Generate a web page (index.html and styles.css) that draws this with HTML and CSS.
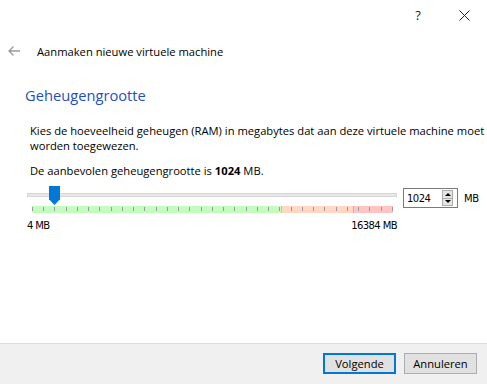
FILE: index.html
```html
<!DOCTYPE html>
<html>
<head>
	<meta charset="utf-8">
	<title>Aanmaken nieuwe virtuele machine</title>
	<link rel="stylesheet" href="styles.css">
</head>
<body>
	<div class="window">
		<div class="titlebar">
			<span class="tb-btn">?</span>
			<span class="tb-btn">
				<svg width="11" height="11" viewBox="0 0 11 11"><path d="M0.5 0.5 L10.5 10.5 M10.5 0.5 L0.5 10.5" stroke="#222" stroke-width="1" fill="none"/></svg>
			</span>
		</div>

		<div class="header">
			<svg class="back" width="12" height="10" viewBox="0 0 12 10"><path d="M5.5 0.5 L1 5 L5.5 9.5 M1 5 L12 5" stroke="#9a9a9a" stroke-width="1.3" fill="none"/></svg>
			<span class="header-title">Aanmaken nieuwe virtuele machine</span>
		</div>

		<div class="content">
			<h1 class="heading">Geheugengrootte</h1>
			<p class="desc">Kies de hoeveelheid geheugen (RAM) in megabytes dat aan deze virtuele machine moet worden toegewezen.</p>
			<p class="desc recommend">De aanbevolen geheugengrootte is <b>1024</b> MB.</p>

			<div class="slider-row">
				<div class="slider">
					<div class="track">
						<div class="thumb"></div>
					</div>
					<div class="scale">
						<div class="zone green" style="width:69.4%"></div>
						<div class="zone orange" style="width:19.8%"></div>
						<div class="zone red" style="width:10.8%"></div>
						<div class="ticks"></div>
					</div>
					<div class="scale-labels">
						<span>4 MB</span>
						<span>16384 MB</span>
					</div>
				</div>
				<div class="spin">
					<span class="spin-value">1024</span>
					<span class="spin-btns">
						<span class="spin-up"></span>
						<span class="spin-down"></span>
					</span>
				</div>
				<span class="unit">MB</span>
			</div>
		</div>

		<div class="footer">
			<button class="btn btn-default">Volgende</button>
			<button class="btn">Annuleren</button>
		</div>
	</div>
</body>
</html>
```

FILE: styles.css
```css
body
{
	margin: 0px;
	padding: 0px;
	background: white;
	font-family: "Segoe UI", "Open Sans", "Noto Sans", sans-serif;
	font-size: 11.2px;
	color: #000;
}

.window
{
	width: 487px;
	height: 384px;
	display: flex;
	flex-direction: column;
	overflow: hidden;
}

.titlebar
{
	height: 30px;
	display: flex;
	justify-content: flex-end;
}

.tb-btn
{
	width: 46px;
	height: 30px;
	display: flex;
	align-items: center;
	justify-content: center;
	font-size: 13px;
	color: #222;
}

.header
{
	height: 26px;
	margin-top: 8px;
	display: flex;
	align-items: center;
	padding-left: 8px;
}

.back { margin-right: 17px; }

.header-title
{
	font-size: 11.2px;
	color: #000;
}

.content
{
	padding: 0px 0px 0px 25px;
}

.heading
{
	margin: 20px 0px 0px 0px;
	font-size: 14.7px;
	font-weight: normal;
	color: #1f4fbf;
	line-height: 22px;
}

.desc
{
	margin: 17px 0px 0px 5px;
	line-height: 15px;
	font-size: 11.2px;
}

.recommend { margin-top: 10px; }

.slider-row
{
	display: flex;
	align-items: flex-start;
	margin-top: 10px;
}

.slider
{
	width: 370px;
	margin-left: 2px;
}

.track
{
	position: relative;
	margin-top: 5px;
	height: 2px;
	background: #e7e7e7;
	border: 1px solid #d6d6d6;
}

.thumb
{
	position: absolute;
	left: 21px;
	top: -8px;
	width: 11px;
	height: 19px;
	background: #0078d7;
	clip-path: polygon(0 0, 100% 0, 100% 70%, 50% 100%, 0 70%);
}

.scale
{
	position: relative;
	display: flex;
	margin: 9px 4px 0px 5px;
	height: 7px;
}

.green { background: #c4fcc0; }
.orange { background: #ffd7c2; border-left: 1px solid #e8b89a; }
.red { background: #ffc4c4; border-left: 1px solid #e8a0a0; }

.ticks
{
	position: absolute;
	left: 0px;
	right: 0px;
	top: 1px;
	height: 4px;
	background: repeating-linear-gradient(to right, #9a9a9a 0px, #9a9a9a 1px, transparent 1px, transparent 11.25px);
}

.scale-labels
{
	display: flex;
	justify-content: space-between;
	margin-top: 7px;
	font-family: "DejaVu Sans", sans-serif;
	font-size: 10px;
	letter-spacing: -0.6px;
	color: #000;
}

.spin
{
	margin-left: 6px;
	margin-top: 0px;
	width: 53px;
	height: 18px;
	border: 1px solid #7a7a7a;
	display: flex;
	align-items: center;
	background: white;
}

.spin-value
{
	flex: 1;
	padding-left: 3px;
	font-family: "DejaVu Sans", sans-serif;
	font-size: 10px;
	letter-spacing: -0.5px;
}

.spin-btns
{
	display: flex;
	flex-direction: column;
	width: 11px;
	height: 16px;
	margin-right: 4px;
	border: 1px solid #adadad;
	background: #e5e5e5;
	box-sizing: border-box;
}

.spin-up, .spin-down
{
	flex: 1;
	display: flex;
	align-items: center;
	justify-content: center;
}

.spin-up { border-bottom: 1px solid #adadad; }

.spin-up::before
{
	content: "";
	border-left: 3px solid transparent;
	border-right: 3px solid transparent;
	border-bottom: 3px solid #000;
}

.spin-down::before
{
	content: "";
	border-left: 3px solid transparent;
	border-right: 3px solid transparent;
	border-top: 3px solid #000;
}

.unit
{
	margin-left: 6px;
	margin-top: 5px;
	font-family: "DejaVu Sans", sans-serif;
	font-size: 10px;
	letter-spacing: -0.5px;
}

.footer
{
	margin-top: auto;
	height: 41px;
	background: #f0f0f0;
	border-top: 1px solid #dfdfdf;
	display: flex;
	justify-content: flex-end;
	align-items: flex-start;
	padding: 9px 10px 0px 0px;
	box-sizing: border-box;
	gap: 8px;
}

.btn
{
	width: 73px;
	height: 21px;
	background: #e1e1e1;
	border: 1px solid #adadad;
	font-family: "Segoe UI", "Open Sans", "Noto Sans", sans-serif;
	font-size: 11.2px;
	padding: 0px;
	color: #000;
}

.btn-default
{
	border: 2px solid #0078d7;
}
```
